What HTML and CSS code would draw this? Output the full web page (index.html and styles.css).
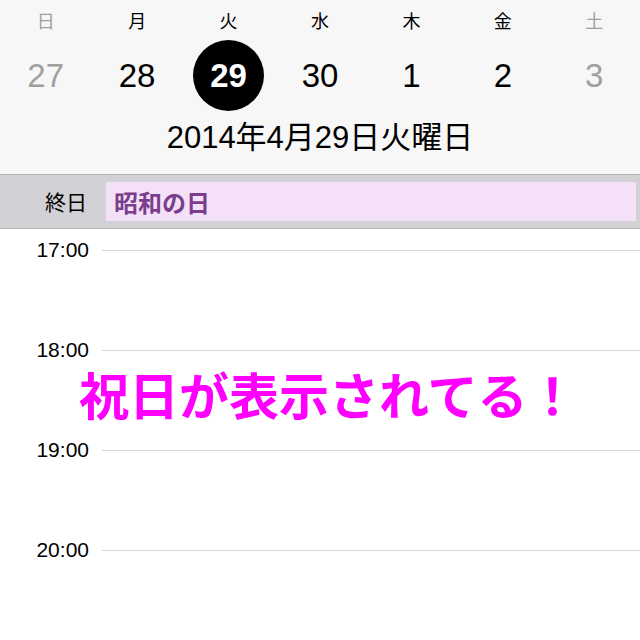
FILE: index.html
```html
<!DOCTYPE html>
<html lang="ja">
<head>
<meta charset="utf-8">
<link rel="stylesheet" href="styles.css">
</head>
<body>
<div class="screen">
  <header class="header">
    <div class="weekdays">
      <div class="wd muted">日</div>
      <div class="wd">月</div>
      <div class="wd">火</div>
      <div class="wd">水</div>
      <div class="wd">木</div>
      <div class="wd">金</div>
      <div class="wd muted">土</div>
    </div>
    <div class="days">
      <div class="day muted">27</div>
      <div class="day">28</div>
      <div class="day"><span class="selected">29</span></div>
      <div class="day">30</div>
      <div class="day">1</div>
      <div class="day">2</div>
      <div class="day muted">3</div>
    </div>
    <div class="title">2014年4月29日火曜日</div>
  </header>
  <div class="allday">
    <div class="allday-label">終日</div>
    <div class="event">昭和の日</div>
  </div>
  <div class="timeline">
    <div class="hour"><div class="hour-label">17:00</div><div class="hour-line"></div></div>
    <div class="hour"><div class="hour-label">18:00</div><div class="hour-line"></div></div>
    <div class="hour"><div class="hour-label">19:00</div><div class="hour-line"></div></div>
    <div class="hour"><div class="hour-label">20:00</div><div class="hour-line"></div></div>
  </div>
  <div class="annotation">祝日が表示されてる！</div>
</div>
</body>
</html>
```
FILE: styles.css
```css
* { box-sizing: border-box; }
html, body { margin: 0; padding: 0; background: #ffffff; }
body {
  font-family: "Liberation Sans", "Noto Sans CJK JP", sans-serif;
  color: #000;
}
.screen {
  position: relative;
  width: 640px;
  height: 640px;
  overflow: hidden;
  background: #ffffff;
}
.header {
  height: 175px;
  background: #f7f7f7;
  border-bottom: 1px solid #b4b4b4;
}
.weekdays, .days {
  display: grid;
  grid-template-columns: repeat(7, 1fr);
}
.weekdays { padding-top: 10px; height: 40px; }
.wd {
  text-align: center;
  font-size: 18px;
  line-height: 20px;
  font-family: "Noto Sans CJK JP", sans-serif;
}
.muted { color: #a0a0a0; }
.days { height: 71px; }
.day {
  display: flex;
  align-items: center;
  justify-content: center;
  font-size: 33px;
  line-height: 1;
}
.selected {
  display: flex;
  align-items: center;
  justify-content: center;
  width: 71px;
  height: 71px;
  border-radius: 50%;
  background: #000;
  color: #fff;
  font-weight: bold;
}
.title {
  text-align: center;
  font-size: 31px;
  line-height: 36px;
  padding-top: 9px;
}
.allday {
  display: flex;
  height: 54px;
  background: #d1d1d6;
  border-bottom: 1px solid #b8b8b8;
  padding: 7px 4px 7px 0;
}
.allday-label {
  width: 106px;
  padding-right: 19px;
  text-align: right;
  font-size: 21px;
  line-height: 39px;
  font-family: "Noto Sans CJK JP", sans-serif;
}
.event {
  flex: 1;
  background: #f4e1f8;
  color: #7a3e8c;
  font-weight: bold;
  font-size: 24px;
  line-height: 39px;
  padding-left: 8px;
  font-family: "Noto Sans CJK JP", sans-serif;
}
.timeline { padding-top: 11px; }
.hour {
  display: flex;
  height: 100px;
}
.hour-label {
  width: 89px;
  text-align: right;
  font-size: 21px;
  line-height: 20px;
  height: 20px;
}
.hour-line {
  flex: 1;
  margin-left: 13px;
  margin-top: 10px;
  height: 1px;
  background: #d6d6d6;
}
.annotation {
  position: absolute;
  left: 79px;
  top: 364px;
  font-size: 50px;
  line-height: 58px;
  font-weight: bold;
  color: #ff00ff;
  font-family: "Noto Sans CJK JP", sans-serif;
  white-space: nowrap;
}
```
